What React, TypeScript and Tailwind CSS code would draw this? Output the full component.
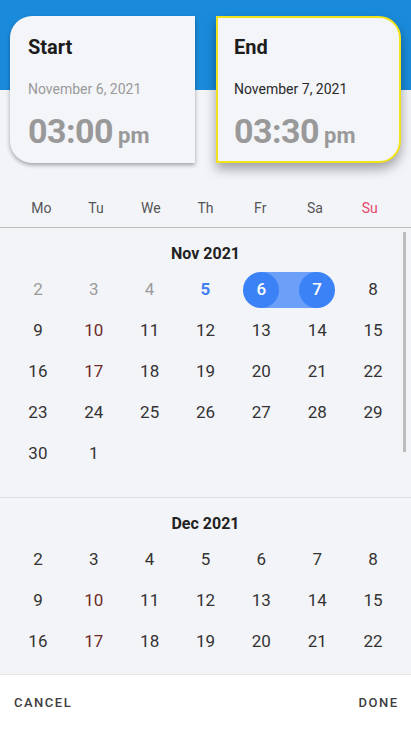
import React from "react";

type Day = { n: number; kind?: "past" | "today" | "start" | "end" | "red" | "normal" };

const weekdays = ["Mo", "Tu", "We", "Th", "Fr", "Sa", "Su"];

const nov: (Day | null)[][] = [
  [{ n: 2, kind: "past" }, { n: 3, kind: "past" }, { n: 4, kind: "past" }, { n: 5, kind: "today" }, { n: 6, kind: "start" }, { n: 7, kind: "end" }, { n: 8 }],
  [{ n: 9 }, { n: 10, kind: "red" }, { n: 11 }, { n: 12 }, { n: 13 }, { n: 14 }, { n: 15 }],
  [{ n: 16 }, { n: 17, kind: "red" }, { n: 18 }, { n: 19 }, { n: 20 }, { n: 21 }, { n: 22 }],
  [{ n: 23 }, { n: 24 }, { n: 25 }, { n: 26 }, { n: 27 }, { n: 28 }, { n: 29 }],
  [{ n: 30 }, { n: 1 }, null, null, null, null, null],
];

const dec: (Day | null)[][] = [
  [{ n: 2 }, { n: 3 }, { n: 4 }, { n: 5 }, { n: 6 }, { n: 7 }, { n: 8 }],
  [{ n: 9 }, { n: 10, kind: "red" }, { n: 11 }, { n: 12 }, { n: 13 }, { n: 14 }, { n: 15 }],
  [{ n: 16 }, { n: 17, kind: "red" }, { n: 18 }, { n: 19 }, { n: 20 }, { n: 21 }, { n: 22 }],
  [{ n: 23 }, { n: 24 }, { n: 25 }, { n: 26 }, { n: 27 }, { n: 28 }, { n: 29 }],
];

function Cell({ d }: { d: Day | null }) {
  if (!d) return <div className="h-[41px]" />;
  const k = d.kind ?? "normal";
  if (k === "start" || k === "end") {
    return (
      <div className="relative h-[41px] flex items-center justify-center">
        <div
          className={
            k === "start"
              ? "absolute left-1/2 right-0 h-[36px] bg-[#6b9ff8]"
              : "absolute left-0 right-1/2 h-[36px] bg-[#6b9ff8]"
          }
        />
        <div className="relative w-[36px] h-[36px] rounded-full bg-[#3b82f6] flex items-center justify-center text-white text-[17px] font-medium">
          {d.n}
        </div>
      </div>
    );
  }
  const cls =
    k === "past"
      ? "text-[#9b9b9b]"
      : k === "today"
      ? "text-[#3f7ff2] font-bold"
      : k === "red"
      ? "text-[#6e2a2a]"
      : "text-[#333]";
  return (
    <div className={"h-[41px] flex items-center justify-center text-[17px] " + cls}>{d.n}</div>
  );
}

function Month({ title, rows }: { title: string; rows: (Day | null)[][] }) {
  return (
    <div className="pt-[15px]">
      <div className="h-[22px] flex items-center justify-center text-[16px] font-bold text-[#222]">
        {title}
      </div>
      <div className="mt-[4px] px-[10px] grid grid-cols-7">
        {rows.flat().map((d, i) => (
          <Cell key={i} d={d} />
        ))}
      </div>
    </div>
  );
}

export default function App() {
  return (
    <div
      className="w-[411px] h-[731px] overflow-hidden flex flex-col bg-[#f3f4f8] relative"
      style={{ fontFamily: "Roboto, 'Noto Sans', sans-serif" }}
    >
      {/* top cards */}
      <div className="shrink-0 bg-[linear-gradient(#1a8bdb_90px,#f3f4f8_90px)] px-[10px] pt-[16px] flex justify-between">
        <div className="w-[185px] h-[147px] bg-[#f4f5f9] rounded-l-[22px] shadow-[0_2px_4px_rgba(0,0,0,0.35)] pl-[18px] pt-[20px]">
          <div className="text-[20px] leading-[22px] font-bold text-[#1c1c1c]">Start</div>
          <div className="mt-[21px] text-[14px] leading-[20px] text-[#9a9a9a]">November 6, 2021</div>
          <div className="mt-[12px] flex items-baseline text-[#999] font-bold">
            <span className="text-[34px] leading-[40px] tracking-[-0.5px]">03:00</span>
            <span className="ml-[5px] text-[22px]">pm</span>
          </div>
        </div>
        <div className="w-[185px] h-[147px] bg-[#f4f5f9] rounded-r-[22px] border-2 border-[#f2e21a] shadow-[0_6px_12px_rgba(0,0,0,0.35)] pl-[16px] pt-[18px]">
          <div className="text-[20px] leading-[22px] font-bold text-[#1c1c1c]">End</div>
          <div className="mt-[21px] text-[14px] leading-[20px] text-[#2a2a2a]">November 7, 2021</div>
          <div className="mt-[12px] flex items-baseline text-[#999] font-bold">
            <span className="text-[34px] leading-[40px] tracking-[-0.5px]">03:30</span>
            <span className="ml-[5px] text-[22px]">pm</span>
          </div>
        </div>
      </div>

      {/* weekday header */}
      <div className="shrink-0 mt-[36px] px-[14px] flex border-b border-[#bdbdbd] pb-[10px]">
        {weekdays.map((w) => (
          <div
            key={w}
            className={
              "flex-1 text-center text-[14px] leading-[18px] " +
              (w === "Su" ? "text-[#e8476a]" : "text-[#555]")
            }
          >
            {w}
          </div>
        ))}
      </div>

      {/* scroll area */}
      <div className="relative flex-1 overflow-hidden">
        <Month title="Nov 2021" rows={nov} />
        <div className="h-[23px]" />
        <div className="h-px bg-[#dcdde2]" />
        <Month title="Dec 2021" rows={dec} />
        <div className="absolute right-[5px] top-[4px] w-[3px] h-[220px] bg-[#bcbcbc]" />
      </div>

      {/* footer */}
      <div className="shrink-0 h-[57px] bg-white border-t border-[#e6e6e6] flex items-center justify-between px-[14px]">
        <span className="text-[13px] font-medium tracking-[1.5px] text-[#3d3d3d]">CANCEL</span>
        <span className="text-[13px] font-medium tracking-[1.5px] text-[#3d3d3d] -mr-[1.5px]">DONE</span>
      </div>
    </div>
  );
}
